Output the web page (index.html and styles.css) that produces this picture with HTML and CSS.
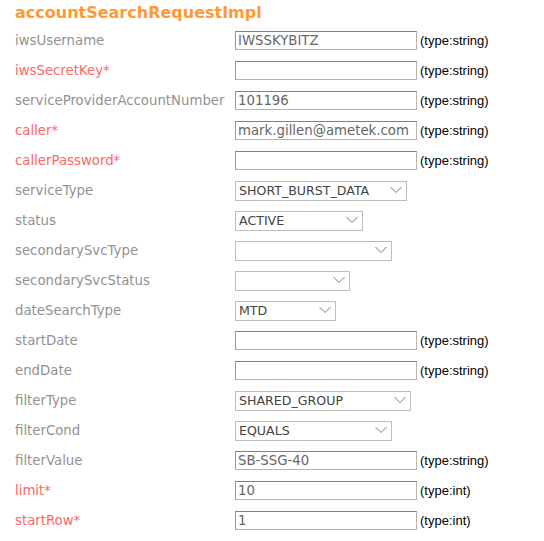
FILE: index.html
```html
<!DOCTYPE html>
<html>
<head>
<meta charset="utf-8">
<link rel="stylesheet" href="styles.css">
</head>
<body>
<div class="page">
  <h1 class="title">accountSearchRequestImpl</h1>
  <div class="form">
    <label class="lbl">iwsUsername</label>
    <div class="field"><input class="txt" value="IWSSKYBITZ"><span class="type">(type:string)</span></div>

    <label class="lbl req">iwsSecretKey*</label>
    <div class="field"><input class="txt" value=""><span class="type">(type:string)</span></div>

    <label class="lbl">serviceProviderAccountNumber</label>
    <div class="field"><input class="txt" value="101196"><span class="type">(type:string)</span></div>

    <label class="lbl req">caller*</label>
    <div class="field"><input class="txt" value="mark.gillen@ametek.com"><span class="type">(type:string)</span></div>

    <label class="lbl req">callerPassword*</label>
    <div class="field"><input class="txt" value=""><span class="type">(type:string)</span></div>

    <label class="lbl">serviceType</label>
    <div class="field"><span class="sel w-sbd"><select><option>SHORT_BURST_DATA</option></select><svg class="chev" viewBox="0 0 12 8" width="12" height="8"><path d="M0.5 1 L6 6.5 L11.5 1" fill="none" stroke="#777" stroke-width="1"/></svg></span></div>

    <label class="lbl">status</label>
    <div class="field"><span class="sel w-act"><select><option>ACTIVE</option></select><svg class="chev" viewBox="0 0 12 8" width="12" height="8"><path d="M0.5 1 L6 6.5 L11.5 1" fill="none" stroke="#777" stroke-width="1"/></svg></span></div>

    <label class="lbl">secondarySvcType</label>
    <div class="field"><span class="sel w-sst"><select><option></option></select><svg class="chev" viewBox="0 0 12 8" width="12" height="8"><path d="M0.5 1 L6 6.5 L11.5 1" fill="none" stroke="#777" stroke-width="1"/></svg></span></div>

    <label class="lbl">secondarySvcStatus</label>
    <div class="field"><span class="sel w-sss"><select><option></option></select><svg class="chev" viewBox="0 0 12 8" width="12" height="8"><path d="M0.5 1 L6 6.5 L11.5 1" fill="none" stroke="#777" stroke-width="1"/></svg></span></div>

    <label class="lbl">dateSearchType</label>
    <div class="field"><span class="sel w-mtd"><select><option>MTD</option></select><svg class="chev" viewBox="0 0 12 8" width="12" height="8"><path d="M0.5 1 L6 6.5 L11.5 1" fill="none" stroke="#777" stroke-width="1"/></svg></span></div>

    <label class="lbl">startDate</label>
    <div class="field"><input class="txt" value=""><span class="type">(type:string)</span></div>

    <label class="lbl">endDate</label>
    <div class="field"><input class="txt" value=""><span class="type">(type:string)</span></div>

    <label class="lbl">filterType</label>
    <div class="field"><span class="sel w-sg"><select><option>SHARED_GROUP</option></select><svg class="chev" viewBox="0 0 12 8" width="12" height="8"><path d="M0.5 1 L6 6.5 L11.5 1" fill="none" stroke="#777" stroke-width="1"/></svg></span></div>

    <label class="lbl">filterCond</label>
    <div class="field"><span class="sel w-eq"><select><option>EQUALS</option></select><svg class="chev" viewBox="0 0 12 8" width="12" height="8"><path d="M0.5 1 L6 6.5 L11.5 1" fill="none" stroke="#777" stroke-width="1"/></svg></span></div>

    <label class="lbl">filterValue</label>
    <div class="field"><input class="txt" value="SB-SSG-40"><span class="type">(type:string)</span></div>

    <label class="lbl req">limit*</label>
    <div class="field"><input class="txt" value="10"><span class="type">(type:int)</span></div>

    <label class="lbl req">startRow*</label>
    <div class="field"><input class="txt" value="1"><span class="type">(type:int)</span></div>
  </div>
</div>
</body>
</html>
```
FILE: styles.css
```css
html, body {
  margin: 0;
  padding: 0;
  background: #ffffff;
}
.page {
  padding: 3px 0 0 15px;
  font-family: "DejaVu Sans", Verdana, sans-serif;
}
.title {
  margin: 0;
  font-size: 16px;
  font-weight: bold;
  color: #ff9933;
  line-height: 20px;
  height: 22px;
}
.form {
  display: grid;
  grid-template-columns: 220px auto;
  grid-auto-rows: 30px;
  align-items: center;
}
.lbl {
  font-size: 13.3px;
  color: #929292;
  white-space: nowrap;
}
.lbl.req {
  color: #ff6666;
}
.field {
  display: flex;
  align-items: center;
  gap: 3px;
}
.txt {
  box-sizing: border-box;
  width: 182px;
  height: 19px;
  margin: 0;
  padding: 0 2px;
  font-family: "DejaVu Sans", Verdana, sans-serif;
  font-size: 13.3px;
  color: #666666;
  border: 1px solid #b4b4b4;
  border-top-color: #808080;
  border-left-color: #999999;
  background: #fff;
}
.type {
  font-family: "Liberation Sans", Arial, sans-serif;
  font-size: 13px;
  color: #000;
}
.sel {
  position: relative;
  display: inline-block;
  height: 20px;
}
.sel select {
  appearance: none;
  -webkit-appearance: none;
  box-sizing: border-box;
  width: 100%;
  height: 20px;
  margin: 0;
  padding: 0 0 0 3px;
  font-family: "DejaVu Sans", Tahoma, sans-serif;
  font-size: 12.6px;
  color: #444;
  border: 1px solid #bdbdbd;
  background: #fff;
  border-radius: 0;
}
.chev {
  position: absolute;
  right: 5px;
  top: 6px;
  pointer-events: none;
}
.w-sbd { width: 172px; }
.w-act { width: 128px; }
.w-sst { width: 157px; }
.w-sss { width: 115px; }
.w-mtd { width: 101px; }
.w-sg { width: 176px; }
.w-eq { width: 157px; }
```
